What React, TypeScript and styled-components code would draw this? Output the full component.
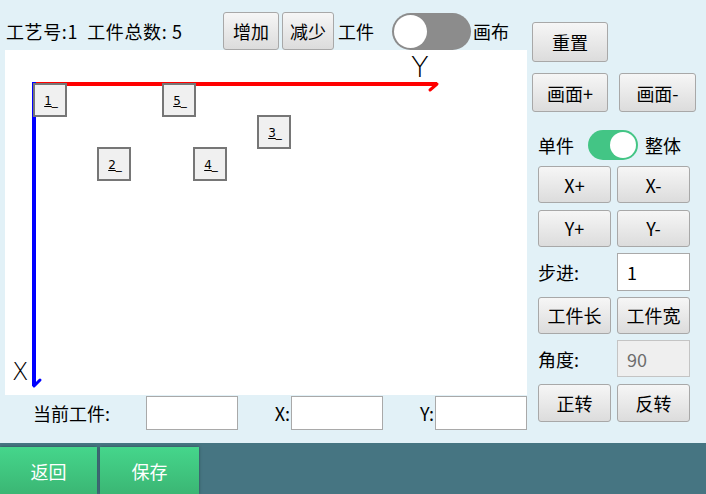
import React from "react";
import styled, { createGlobalStyle } from "styled-components";

const GlobalStyle = createGlobalStyle`
  html, body { margin: 0; padding: 0; }
  body {
    font-family: "Noto Sans CJK SC", "Noto Sans", sans-serif;
    background: #e2f1f7;
  }
  * { box-sizing: border-box; }
`;

const Page = styled.div`
  width: 706px;
  height: 494px;
  display: flex;
  flex-direction: column;
  background: #e2f1f7;
  overflow: hidden;
  color: #000;
`;

const Main = styled.div`
  height: 443px;
  display: flex;
`;

const LeftCol = styled.div`
  width: 527px;
  padding-left: 5px;
  display: flex;
  flex-direction: column;
`;

const Header = styled.div`
  height: 50px;
  padding-top: 12px;
  display: flex;
  align-items: center;
`;

const InfoText = styled.span`
  width: 218px;
  padding-left: 1px;
  font-size: 18px;
  letter-spacing: 0.6px;
  line-height: 1;
  white-space: pre;
`;

const Label = styled.span<{ $ml?: number }>`
  font-size: 18px;
  line-height: 1;
  margin-left: ${(p) => p.$ml ?? 0}px;
  white-space: nowrap;
`;

const Btn = styled.button<{ $w: number; $h: number; $ml?: number }>`
  width: ${(p) => p.$w}px;
  height: ${(p) => p.$h}px;
  margin-left: ${(p) => p.$ml ?? 0}px;
  padding: 0;
  border: 1px solid #a8a8a8;
  border-radius: 3px;
  background: linear-gradient(#f6f6f6, #dcdcdc);
  font-family: "Noto Sans CJK SC", "Noto Sans", sans-serif;
  font-size: 18px;
  line-height: 1;
  color: #000;
  display: flex;
  align-items: center;
  justify-content: center;
`;

const Switch = styled.div<{ $on: boolean; $w: number; $h: number; $ml?: number }>`
  position: relative;
  width: ${(p) => p.$w}px;
  height: ${(p) => p.$h}px;
  margin-left: ${(p) => p.$ml ?? 0}px;
  border-radius: ${(p) => p.$h / 2}px;
  background: ${(p) => (p.$on ? "#43c585" : "#8c8c8c")};
  &::after {
    content: "";
    position: absolute;
    top: 2px;
    left: ${(p) => (p.$on ? p.$w - p.$h + 2 : 2)}px;
    width: ${(p) => p.$h - 4}px;
    height: ${(p) => p.$h - 4}px;
    border-radius: 50%;
    background: #fff;
  }
`;

const Canvas = styled.div`
  position: relative;
  width: 522px;
  height: 345px;
  background: #fff;
`;

const Axes = styled.svg`
  position: absolute;
  left: 0;
  top: 0;
`;

const AxisLetter = styled.div<{ $x: number; $y: number; $size: number }>`
  position: absolute;
  left: ${(p) => p.$x}px;
  top: ${(p) => p.$y}px;
  font-family: "DejaVu Sans", "Liberation Sans", sans-serif;
  font-weight: 200;
  font-size: ${(p) => p.$size}px;
  line-height: 1;
  color: #000;
`;

const Node = styled.div`
  position: absolute;
  width: 34px;
  height: 34px;
  border: 2px solid #767676;
  background: #f0f0f0;
  display: flex;
  align-items: center;
  justify-content: center;
  font-family: "DejaVu Sans", "Liberation Sans", sans-serif;
  font-size: 12px;
  line-height: 1;
  padding-left: 2px;
  padding-top: 1px;
  & u {
    text-decoration: underline;
  }
`;

const BottomRow = styled.div`
  height: 35px;
  display: flex;
  align-items: center;
  padding-left: 28px;
`;

const FieldLabel = styled.span<{ $w: number; $right?: boolean }>`
  width: ${(p) => p.$w}px;
  text-align: ${(p) => (p.$right ? "right" : "left")};
  padding-right: ${(p) => (p.$right ? 1 : 0)}px;
  font-size: 18px;
  line-height: 1;
  white-space: nowrap;
`;

const Field = styled.input<{ $w: number; $h: number }>`
  width: ${(p) => p.$w}px;
  height: ${(p) => p.$h}px;
  border: 1px solid #a9a9a9;
  background: #fff;
  padding: 0 0 0 9px;
  font-family: "Noto Sans CJK SC", "Noto Sans", sans-serif;
  font-size: 18px;
  color: #000;
  outline: none;
  &:disabled {
    background: #efefef;
    border-color: #c4c4c4;
    color: #6d6d6d;
  }
`;

const RightCol = styled.div`
  flex: 1;
  padding-top: 22px;
  padding-left: 5px;
  display: flex;
  flex-direction: column;
`;

const BtnRow = styled.div<{ $mt: number; $gap: number }>`
  display: flex;
  align-items: center;
  margin-top: ${(p) => p.$mt}px;
  gap: ${(p) => p.$gap}px;
`;

const ModeRow = styled.div`
  display: flex;
  align-items: center;
  margin-top: 18px;
  padding-left: 6px;
  height: 30px;
`;

const ControlGrid = styled.div`
  display: grid;
  grid-template-columns: 73px 73px;
  grid-auto-rows: 37px;
  column-gap: 6px;
  row-gap: 6.6px;
  margin-top: 6px;
  padding-left: 6px;
`;

const GridLabel = styled.span`
  display: flex;
  align-items: center;
  font-size: 18px;
  line-height: 1;
`;

const Footer = styled.div`
  flex: 1;
  background: #467582;
  display: flex;
  align-items: flex-end;
  gap: 3px;
`;

const GreenBtn = styled.button<{ $w: number }>`
  width: ${(p) => p.$w}px;
  height: 47px;
  border: none;
  padding: 0;
  background: linear-gradient(#45d68b, #3bb674);
  box-shadow: 0 0 3px rgba(0, 0, 0, 0.35);
  color: #fff;
  font-family: "Noto Sans CJK SC", "Noto Sans", sans-serif;
  font-size: 18px;
  line-height: 1;
`;

const nodes = [
  { id: 1, x: 28, y: 33 },
  { id: 5, x: 157, y: 33 },
  { id: 3, x: 252, y: 65 },
  { id: 2, x: 92, y: 97 },
  { id: 4, x: 188, y: 97 },
];

export default function App() {
  return (
    <Page>
      <GlobalStyle />
      <Main>
        <LeftCol>
          <Header>
            <InfoText>{"工艺号:1  工件总数: 5"}</InfoText>
            <Btn $w={56} $h={38}>增加</Btn>
            <Btn $w={52} $h={38} $ml={3}>减少</Btn>
            <Label $ml={4}>工件</Label>
            <Switch $on={false} $w={79} $h={37} $ml={18} />
            <Label $ml={2}>画布</Label>
          </Header>
          <Canvas>
            <Axes width={522} height={345}>
              <line x1={28} y1={34} x2={432} y2={34} stroke="#ff0000" strokeWidth={4} />
              <line x1={432} y1={34} x2={425} y2={40} stroke="#ff0000" strokeWidth={3} strokeLinecap="round" />
              <line x1={29} y1={32} x2={29} y2={336} stroke="#0000ff" strokeWidth={4} />
              <line x1={29} y1={336} x2={35} y2={330} stroke="#0000ff" strokeWidth={3} strokeLinecap="round" />
            </Axes>
            <AxisLetter $x={406} $y={3} $size={29}>Y</AxisLetter>
            <AxisLetter $x={7} $y={310} $size={24}>X</AxisLetter>
            {nodes.map((n) => (
              <Node key={n.id} style={{ left: n.x, top: n.y }}>
                <u>{n.id}</u>_
              </Node>
            ))}
          </Canvas>
          <BottomRow>
            <FieldLabel $w={113}>当前工件:</FieldLabel>
            <Field $w={92} $h={34} />
            <FieldLabel $w={53} $right>X:</FieldLabel>
            <Field $w={92} $h={34} />
            <FieldLabel $w={52} $right>Y:</FieldLabel>
            <Field $w={92} $h={34} />
          </BottomRow>
        </LeftCol>
        <RightCol>
          <Btn $w={76} $h={40}>重置</Btn>
          <BtnRow $mt={11} $gap={11}>
            <Btn $w={76} $h={39}>画面+</Btn>
            <Btn $w={77} $h={39}>画面-</Btn>
          </BtnRow>
          <ModeRow>
            <Label>单件</Label>
            <Switch $on={true} $w={50} $h={30} $ml={14} />
            <Label $ml={7}>整体</Label>
          </ModeRow>
          <ControlGrid>
            <Btn $w={73} $h={37}>X+</Btn>
            <Btn $w={73} $h={37}>X-</Btn>
            <Btn $w={73} $h={37}>Y+</Btn>
            <Btn $w={73} $h={37}>Y-</Btn>
            <GridLabel>步进:</GridLabel>
            <Field $w={73} $h={38} defaultValue="1" />
            <Btn $w={73} $h={37}>工件长</Btn>
            <Btn $w={73} $h={37}>工件宽</Btn>
            <GridLabel>角度:</GridLabel>
            <Field $w={73} $h={37} defaultValue="90" disabled />
            <Btn $w={73} $h={38}>正转</Btn>
            <Btn $w={73} $h={38}>反转</Btn>
          </ControlGrid>
        </RightCol>
      </Main>
      <Footer>
        <GreenBtn $w={97}>返回</GreenBtn>
        <GreenBtn $w={99}>保存</GreenBtn>
      </Footer>
    </Page>
  );
}
